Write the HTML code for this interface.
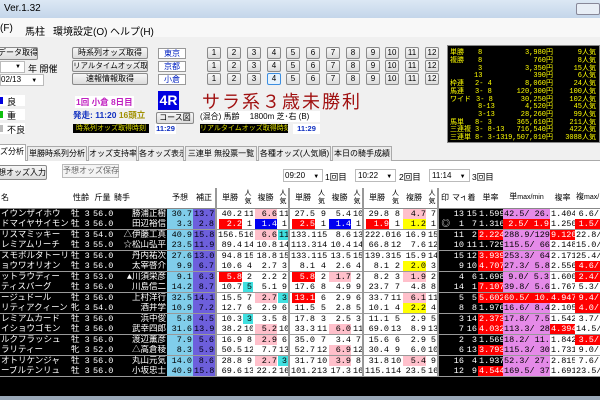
<!DOCTYPE html>
<html><head><meta charset="utf-8"><style>
*{margin:0;padding:0;box-sizing:border-box}
body{width:600px;height:400px;overflow:hidden;background:#f0f0f0;font-family:"Liberation Sans","Noto Sans CJK JP",sans-serif;font-size:10px;position:relative;color:#000}
.a{position:absolute;white-space:nowrap}
.btn{position:absolute;border:1px solid #8a8a8a;border-radius:2px;background:linear-gradient(#f6f6f6,#dcdcdc);text-align:center;font-size:8px;line-height:10px;white-space:nowrap;overflow:hidden}
.nb{position:absolute;width:14px;height:12px;border:1px solid #8a8a8a;border-radius:2px;background:linear-gradient(#f8f8f8,#dadada);text-align:center;font-size:8px;line-height:10px}
.vb{position:absolute;left:158px;width:28px;height:11px;background:#fff;border:1px solid #999;color:#0020c0;font-size:8px;line-height:9px;text-align:center}
.tab{position:absolute;top:146px;height:15px;border:1px solid #aaa;border-bottom:none;background:#ececec;font-size:8px;line-height:13px;text-align:center;white-space:nowrap;overflow:hidden}
table{position:absolute;left:0;top:188px;width:600px;border-collapse:collapse;table-layout:fixed;font-family:"Liberation Mono","Noto Sans CJK JP",monospace;font-size:8.5px}
td{height:10px;line-height:10px;padding:0 1px;white-space:nowrap;overflow:hidden;text-align:right;background:#fff}
tr.h td{height:20px;text-align:center;font-family:"Liberation Sans","Noto Sans CJK JP",sans-serif;font-size:8px;border-bottom:1px solid #888}
tr.s td{border-bottom:1px solid #999}
td.k{background:#000;color:#fff}
td.kl{background:#000;color:#fff;text-align:left}
td.y{background:#80cdea}
td.v{background:#6d5fdc;color:#001}
td.R{background:#f00;color:#fff;box-shadow:inset 2px 0 #fff,inset -1px 0 #fff}
td.B{background:#0000f0;color:#fff;box-shadow:inset 2px 0 #fff,inset -1px 0 #fff}
td.P{background:#ffc0cb;box-shadow:inset 2px 0 #fff,inset -1px 0 #fff}
td.Y{background:#ff0;box-shadow:inset 2px 0 #fff,inset -1px 0 #fff}
td.C{background:#40e0e0}
td.m{background:#e58ae8}
td.mR{background:#f00;color:#fff}
td.kR{background:#f00;color:#fff}
td.g{border-right:2px solid #999}
.od{position:absolute;left:447px;top:45px;width:153px;height:98px;background:#000;border:1px solid #888;color:#ff0;font-family:"Liberation Mono","Noto Sans CJK JP",monospace;font-size:7px;overflow:hidden}
.od div{position:absolute;height:8px;line-height:8px;white-space:pre}
</style></head><body>
<div class="a" style="left:0;top:0;width:600px;height:18px;background:linear-gradient(#dce8f4,#c4d6ea);"></div>
<div class="a" style="left:4px;top:3px;font-size:10px">Ver.1.32</div>
<div class="a" style="left:576px;top:3px;width:24px;height:12px;border:1px solid #889;border-radius:2px;background:#e8eef6"></div>
<div class="a" style="left:0;top:18px;width:600px;height:19px;background:#f8f8f8"></div>
<div class="a" style="left:0;top:23px;font-size:10px">(F)</div>
<div class="a" style="left:25px;top:23px;font-size:10px">馬柱</div>
<div class="a" style="left:53px;top:23px;font-size:10px">環境設定(O)</div>
<div class="a" style="left:110px;top:23px;font-size:10px">ヘルプ(H)</div>

<div class="btn" style="left:-3px;top:47px;width:41px;height:13px">データ取得</div>
<div class="a" style="left:0;top:61px;width:25px;height:12px;background:#fff;border:1px solid #bbb;font-size:6px;line-height:10px;text-align:right;padding-right:3px">▼</div>
<div class="a" style="left:28px;top:62px;font-size:9px">年 開催</div>
<div class="a" style="left:0;top:74px;width:44px;height:12px;background:#fff;border:1px solid #bbb;font-size:8px;line-height:10px">02/13 <span style="font-size:6px;margin-left:8px">▼</span></div>
<div class="a" style="left:0;top:95px;width:25px;height:11px;background:#fff"></div>
<div class="a" style="left:0;top:97px;width:3px;height:7px;background:#0000e0"></div>
<div class="a" style="left:7px;top:95px;font-size:9px">良</div>
<div class="a" style="left:0;top:109px;width:25px;height:11px;background:#fff"></div>
<div class="a" style="left:0;top:111px;width:3px;height:7px;background:#10c010"></div>
<div class="a" style="left:7px;top:109px;font-size:9px">重</div>
<div class="a" style="left:0;top:123px;width:25px;height:11px;background:#fff"></div>
<div class="a" style="left:0;top:125px;width:3px;height:7px;background:#bbb"></div>
<div class="a" style="left:7px;top:123px;font-size:9px">不良</div>

<div class="btn" style="left:72px;top:47px;width:76px;height:12px">時系列オッズ取得</div>
<div class="btn" style="left:72px;top:60px;width:76px;height:12px;font-size:7.5px">リアルタイムオッズ取得</div>
<div class="btn" style="left:72px;top:73px;width:76px;height:12px">速報情報取得</div>
<div class="vb" style="top:48px">東京</div>
<div class="vb" style="top:61px">京都</div>
<div class="vb" style="top:74px">小倉</div>

<div class="nb" style="left:207px;top:47px">1</div><div class="nb" style="left:227px;top:47px">2</div><div class="nb" style="left:247px;top:47px">3</div><div class="nb" style="left:267px;top:47px">4</div><div class="nb" style="left:286px;top:47px">5</div><div class="nb" style="left:306px;top:47px">6</div><div class="nb" style="left:326px;top:47px">7</div><div class="nb" style="left:346px;top:47px">8</div><div class="nb" style="left:366px;top:47px">9</div><div class="nb" style="left:385px;top:47px">10</div><div class="nb" style="left:405px;top:47px">11</div><div class="nb" style="left:425px;top:47px">12</div>
<div class="nb" style="left:207px;top:60px">1</div><div class="nb" style="left:227px;top:60px">2</div><div class="nb" style="left:247px;top:60px">3</div><div class="nb" style="left:267px;top:60px">4</div><div class="nb" style="left:286px;top:60px">5</div><div class="nb" style="left:306px;top:60px">6</div><div class="nb" style="left:326px;top:60px">7</div><div class="nb" style="left:346px;top:60px">8</div><div class="nb" style="left:366px;top:60px">9</div><div class="nb" style="left:385px;top:60px">10</div><div class="nb" style="left:405px;top:60px">11</div><div class="nb" style="left:425px;top:60px">12</div>
<div class="nb" style="left:207px;top:73px">1</div><div class="nb" style="left:227px;top:73px">2</div><div class="nb" style="left:247px;top:73px">3</div><div class="nb" style="left:267px;top:73px;border-color:#3c8ee0;background:#e6f2fc">4</div><div class="nb" style="left:286px;top:73px">5</div><div class="nb" style="left:306px;top:73px">6</div><div class="nb" style="left:326px;top:73px">7</div><div class="nb" style="left:346px;top:73px">8</div><div class="nb" style="left:366px;top:73px">9</div><div class="nb" style="left:385px;top:73px">10</div><div class="nb" style="left:405px;top:73px">11</div><div class="nb" style="left:425px;top:73px">12</div>

<div class="a" style="left:75px;top:96px;font-size:8.5px;font-weight:bold;color:#c020c0;background:#fff;padding:0 1px">1回 小倉 8日目</div>
<div class="a" style="left:73px;top:109px;font-size:8.5px;font-weight:bold;color:#1030c0">発走: 11:20 <span style="color:#a09000">16頭立</span></div>
<div class="a" style="left:158px;top:91px;width:21px;height:19px;background:#0000e0;color:#fff;font-weight:bold;font-size:14px;line-height:19px;text-align:center">4R</div>
<div class="a" style="left:202px;top:88px;font-size:18px;color:#a01010;letter-spacing:2px">サラ系３歳未勝利</div>
<div class="btn" style="left:156px;top:112px;width:38px;height:12px">コース図</div>
<div class="a" style="left:200px;top:111px;width:120px;height:11px;background:#fff;font-size:8px;line-height:11px">(混合) 馬齢　 1800m 芝･右 (B)</div>
<div class="a" style="left:73px;top:124px;width:76px;height:9px;background:#000;color:#e0e000;font-size:7px;line-height:9px;text-align:center;overflow:hidden">時系列オッズ取得時刻</div>
<div class="a" style="left:155px;top:124px;width:21px;height:10px;background:#fff;color:#1030c0;font-size:7.5px;font-weight:bold;line-height:10px;text-align:center">11:29</div>
<div class="a" style="left:200px;top:124px;width:88px;height:9px;background:#000;color:#e0e000;font-size:7px;line-height:9px;text-align:center;overflow:hidden">リアルタイムオッズ取得時刻</div>
<div class="a" style="left:293px;top:124px;width:27px;height:10px;background:#fff;color:#1030c0;font-size:7.5px;font-weight:bold;line-height:10px;text-align:center">11:29</div>

<div class="od">
<div style="top:3px;left:2px">単勝</div><div style="top:3px;left:30px">8</div><div style="top:3px;right:46px">3,980円</div><div style="top:3px;right:3px">9人気</div>
<div style="top:11px;left:2px">複勝</div><div style="top:11px;left:30px">8</div><div style="top:11px;right:46px">760円</div><div style="top:11px;right:3px">8人気</div>
<div style="top:19px;left:30px">3</div><div style="top:19px;right:46px">3,350円</div><div style="top:19px;right:3px">15人気</div>
<div style="top:26px;left:26px">13</div><div style="top:26px;right:46px">390円</div><div style="top:26px;right:3px">6人気</div>
<div style="top:34px;left:2px">枠連</div><div style="top:34px;left:27px">2- 4</div><div style="top:34px;right:46px">8,060円</div><div style="top:34px;right:3px">24人気</div>
<div style="top:42px;left:2px">馬連</div><div style="top:42px;left:27px">3- 8</div><div style="top:42px;right:46px">120,300円</div><div style="top:42px;right:3px">100人気</div>
<div style="top:50px;left:2px">ワイド</div><div style="top:50px;left:28px">3- 8</div><div style="top:50px;right:46px">30,250円</div><div style="top:50px;right:3px">102人気</div>
<div style="top:57px;left:30px">8-13</div><div style="top:57px;right:46px">4,520円</div><div style="top:57px;right:3px">45人気</div>
<div style="top:65px;left:30px">3-13</div><div style="top:65px;right:46px">28,260円</div><div style="top:65px;right:3px">99人気</div>
<div style="top:73px;left:2px">馬単</div><div style="top:73px;left:27px">8- 3</div><div style="top:73px;right:46px">365,610円</div><div style="top:73px;right:3px">211人気</div>
<div style="top:80px;left:2px">三連複</div><div style="top:80px;left:27px">3- 8-13</div><div style="top:80px;right:46px">716,540円</div><div style="top:80px;right:3px">422人気</div>
<div style="top:88px;left:2px">三連単</div><div style="top:88px;left:27px">8- 3-13</div><div style="top:88px;right:46px">19,507,010円</div><div style="top:88px;right:3px">3088人気</div>
</div>

<div class="a" style="left:0;top:160px;width:600px;height:1px;background:#aaa"></div>
<div class="tab" style="left:-2px;width:28px;background:#fff;top:144px;height:17px">ズ分析</div>
<div class="tab" style="left:27px;width:60px">単勝時系列分析</div>
<div class="tab" style="left:88px;width:49px">オッズ支持率</div>
<div class="tab" style="left:138px;width:46px">各オッズ表示</div>
<div class="tab" style="left:185px;width:72px">三連単 無投票一覧</div>
<div class="tab" style="left:258px;width:73px">各種オッズ(人気順)</div>
<div class="tab" style="left:332px;width:60px">本日の騎手成績</div>
<div class="a" style="left:0;top:161px;width:600px;height:27px;background:#fff"></div>
<div class="btn" style="left:-3px;top:165px;width:50px;height:15px;line-height:13px">想オッズ入力</div>
<div class="a" style="left:62px;top:164px;width:57px;height:14px;border:1px solid #bbb;color:#666;font-size:8px;line-height:12px;text-align:center;background:#f4f4f4">予想オッズ保存</div>
<div class="a" style="left:283px;top:169px;width:40px;height:13px;border:1px solid #bbb;font-size:8px;line-height:11px;padding-left:1px">09:20 <span style="font-size:6px;margin-left:6px">▼</span></div>
<div class="a" style="left:325px;top:171px;font-size:8.5px">1回目</div>
<div class="a" style="left:355px;top:169px;width:41px;height:13px;border:1px solid #bbb;font-size:8px;line-height:11px;padding-left:2px">10:22 <span style="font-size:6px;margin-left:6px">▼</span></div>
<div class="a" style="left:399px;top:171px;font-size:8.5px">2回目</div>
<div class="a" style="left:429px;top:169px;width:41px;height:13px;border:1px solid #bbb;font-size:8px;line-height:11px;padding-left:2px">11:14 <span style="font-size:6px;margin-left:6px">▼</span></div>
<div class="a" style="left:472px;top:171px;font-size:8.5px">3回目</div>

<div class="a" style="left:0;top:376px;width:600px;height:20px;background:#000"></div>
<div class="a" style="left:0;top:396px;width:600px;height:4px;background:#9aa8b8"></div>

<table>
<colgroup><col style="width:70px"><col style="width:22px"><col style="width:21px"><col style="width:54px"><col style="width:26px"><col style="width:23px"><col style="width:27px"><col style="width:10px"><col style="width:25px"><col style="width:11px"><col style="width:27px"><col style="width:11px"><col style="width:25px"><col style="width:11px"><col style="width:27px"><col style="width:11px"><col style="width:26px"><col style="width:11px"><col style="width:13px"><col style="width:14px"><col style="width:13px"><col style="width:25px"><col style="width:47px"><col style="width:25px"><col style="width:25px"></colgroup>
<tr class="h"><td style="text-align:left">名</td><td>性齢</td><td>斤量</td><td style="text-align:left">騎手</td><td>予想</td><td class="g">補正</td><td>単勝</td><td style="font-size:7px;line-height:8px">人<br>気</td><td>複勝</td><td class="g" style="font-size:7px;line-height:8px">人<br>気</td><td>単勝</td><td style="font-size:7px;line-height:8px">人<br>気</td><td>複勝</td><td class="g" style="font-size:7px;line-height:8px">人<br>気</td><td>単勝</td><td style="font-size:7px;line-height:8px">人<br>気</td><td>複勝</td><td class="g" style="font-size:7px;line-height:8px">人<br>気</td><td>印</td><td>マイ</td><td>着</td><td>単率</td><td>単<span style="font-size:7px">max/min</span></td><td>複率</td><td style="text-align:left">複<span style="font-size:7px">max/</span></td></tr>
<tr><td class="kl">イウンザイホウ</td><td class="kl">牡 3</td><td class="k">56.0</td><td class="k">勝浦正樹</td><td class="y">30.7</td><td class="v g">13.7</td><td>40.2</td><td>11</td><td class="P">6.6</td><td class="g">11</td><td>27.5</td><td>9</td><td>5.4</td><td class="g">10</td><td>29.8</td><td>8</td><td class="P">4.7</td><td class="g">7</td><td class="k"></td><td class="k">13</td><td class="k">15</td><td class="k">1.599</td><td class="m">42.5/ 26.6</td><td>1.404</td><td>6.6/</td></tr>
<tr class="s"><td class="kl">ドマイヤサイモン</td><td class="kl">牡 3</td><td class="k">56.0</td><td class="k">田辺裕信</td><td class="y">3.3</td><td class="v g">2.8</td><td class="R">2.2</td><td>1</td><td class="B">1.4</td><td class="g">1</td><td class="R">2.5</td><td>1</td><td class="B">1.4</td><td class="g">1</td><td class="R">1.9</td><td>1</td><td class="Y">1.2</td><td class="g">1</td><td class="k">◎</td><td class="k">1</td><td class="k">7</td><td class="k">1.316</td><td class="mR">2.5/ 1.9</td><td>1.250</td><td class="mR">1.5/</td></tr>
<tr><td class="kl">リスマミッキー</td><td class="kl">牡 3</td><td class="k">54.0</td><td class="k">△伊藤工真</td><td class="y">40.9</td><td class="v g">15.8</td><td>156.5</td><td>16</td><td class="P">6.6</td><td class="C g">11</td><td>133.1</td><td>15</td><td>8.6</td><td class="g">13</td><td>222.0</td><td>16</td><td>16.9</td><td class="g">15</td><td class="k"></td><td class="k">11</td><td class="k">2</td><td class="kR">2.224</td><td class="m">288.9/129.9</td><td class="kR">9.120</td><td>22.8/</td></tr>
<tr class="s"><td class="kl">レミアムリーチ</td><td class="kl">牡 3</td><td class="k">55.0</td><td class="k">☆松山弘平</td><td class="y">23.5</td><td class="v g">11.9</td><td>89.4</td><td>14</td><td>10.8</td><td class="g">14</td><td>113.3</td><td>14</td><td>10.4</td><td class="g">14</td><td>66.8</td><td>12</td><td>7.6</td><td class="g">12</td><td class="k"></td><td class="k">10</td><td class="k">11</td><td class="k">1.729</td><td class="m">115.5/ 66.8</td><td>2.148</td><td>15.0/</td></tr>
<tr><td class="kl">スモボルタトーリ</td><td class="kl">牡 3</td><td class="k">56.0</td><td class="k">丹内祐次</td><td class="y">27.6</td><td class="v g">13.0</td><td>94.8</td><td>15</td><td>18.8</td><td class="g">15</td><td>133.1</td><td>15</td><td>13.5</td><td class="g">15</td><td>139.3</td><td>15</td><td>15.9</td><td class="g">14</td><td class="k"></td><td class="k">15</td><td class="k">12</td><td class="kR">3.939</td><td class="m">253.3/ 64.3</td><td>2.171</td><td>25.4/</td></tr>
<tr class="s"><td class="kl">ョウワオリオン</td><td class="kl">牡 3</td><td class="k">56.0</td><td class="k">太宰啓介</td><td class="y">9.9</td><td class="v g">6.7</td><td>10.6</td><td>4</td><td>2.7</td><td class="g">3</td><td>8.1</td><td>4</td><td>2.6</td><td class="g">4</td><td>8.1</td><td>2</td><td class="Y">2.0</td><td class="g">3</td><td class="k"></td><td class="k">9</td><td class="k">10</td><td class="kR">4.707</td><td class="m">27.3/ 5.8</td><td>2.556</td><td class="mR">4.6/</td></tr>
<tr><td class="kl">ットラウディー</td><td class="kl">牡 3</td><td class="k">53.0</td><td class="k">▲川須栄彦</td><td class="y">9.1</td><td class="v g">6.3</td><td class="R">5.8</td><td>2</td><td>2.2</td><td class="g">2</td><td class="R">5.8</td><td>2</td><td class="P">1.7</td><td class="g">2</td><td>8.2</td><td>3</td><td class="P">1.9</td><td class="g">2</td><td class="k"></td><td class="k">4</td><td class="k">6</td><td class="k">1.698</td><td class="m">9.0/ 5.3</td><td>1.600</td><td class="mR">2.4/</td></tr>
<tr class="s"><td class="kl">ティスバーグ</td><td class="kl">牡 3</td><td class="k">56.0</td><td class="k">川島信二</td><td class="y">14.2</td><td class="v g">8.7</td><td>10.7</td><td class="C">5</td><td>5.1</td><td class="g">9</td><td>17.6</td><td>8</td><td>4.9</td><td class="g">9</td><td>23.7</td><td>7</td><td>4.8</td><td class="g">8</td><td class="k"></td><td class="k">14</td><td class="k">1</td><td class="kR">7.107</td><td class="m">39.8/ 5.6</td><td>1.767</td><td>5.3/</td></tr>
<tr><td class="kl">ージュドール</td><td class="kl">牡 3</td><td class="k">56.0</td><td class="k">上村洋行</td><td class="y">32.5</td><td class="v g">14.1</td><td>15.5</td><td>7</td><td class="P">2.7</td><td class="C g">3</td><td class="R">13.1</td><td>6</td><td>2.9</td><td class="g">6</td><td>33.7</td><td>11</td><td class="P">6.1</td><td class="g">11</td><td class="k"></td><td class="k">5</td><td class="k">5</td><td class="kR">5.602</td><td class="mR">60.5/ 10.8</td><td class="kR">4.947</td><td class="mR">9.4/</td></tr>
<tr class="s"><td class="kl">リティアクィーン</td><td class="kl">牝 3</td><td class="k">54.0</td><td class="k">酒井学</td><td class="y">10.9</td><td class="v g">7.2</td><td>12.7</td><td>6</td><td>2.9</td><td class="g">6</td><td>11.5</td><td>5</td><td>2.8</td><td class="g">5</td><td>10.1</td><td>4</td><td class="Y">2.2</td><td class="g">4</td><td class="k"></td><td class="k">8</td><td class="k">8</td><td class="k">1.976</td><td class="m">16.6/ 8.4</td><td>2.105</td><td class="mR">4.0/</td></tr>
<tr><td class="kl">レミアムカード</td><td class="kl">牡 3</td><td class="k">56.0</td><td class="k">浜中俊</td><td class="y">5.8</td><td class="v g">4.5</td><td>10.3</td><td class="C">3</td><td>3.5</td><td class="g">8</td><td>17.8</td><td>3</td><td>2.5</td><td class="g">3</td><td>11.1</td><td>5</td><td>2.9</td><td class="g">5</td><td class="k"></td><td class="k">3</td><td class="k">14</td><td class="kR">2.373</td><td class="m">17.8/ 7.5</td><td>1.542</td><td>3.7/</td></tr>
<tr class="s"><td class="kl">イショウゴモン</td><td class="kl">牡 3</td><td class="k">56.0</td><td class="k">武幸四郎</td><td class="y">31.6</td><td class="v g">13.9</td><td>38.2</td><td>10</td><td class="P">5.2</td><td class="g">10</td><td>33.3</td><td>11</td><td class="P">6.0</td><td class="g">11</td><td>69.0</td><td>13</td><td>8.9</td><td class="g">13</td><td class="k"></td><td class="k">7</td><td class="k">16</td><td class="kR">4.032</td><td class="m">113.3/ 28.1</td><td class="kR">4.394</td><td>14.5/</td></tr>
<tr><td class="kl">ルクフラッシュ</td><td class="kl">牡 3</td><td class="k">56.0</td><td class="k">渡辺薫彦</td><td class="y">7.9</td><td class="v g">5.6</td><td>16.9</td><td>8</td><td class="P">2.9</td><td class="g">6</td><td>35.0</td><td>7</td><td>3.4</td><td class="g">7</td><td>15.6</td><td>6</td><td>2.9</td><td class="g">5</td><td class="k"></td><td class="k">2</td><td class="k">3</td><td class="k">1.569</td><td class="m">18.2/ 11.6</td><td>1.842</td><td class="mR">3.5/</td></tr>
<tr class="s"><td class="kl">ラリティー</td><td class="kl">牝 3</td><td class="k">52.0</td><td class="k">△高倉稜</td><td class="y">8.3</td><td class="v g">5.9</td><td>50.5</td><td>12</td><td>7.7</td><td class="g">13</td><td>52.7</td><td>12</td><td class="P">6.9</td><td class="g">12</td><td>30.4</td><td>9</td><td>6.0</td><td class="g">10</td><td class="k"></td><td class="k">6</td><td class="k">13</td><td class="kR">3.793</td><td class="m">115.3/ 30.4</td><td>1.731</td><td>9.0/</td></tr>
<tr><td class="kl">オトリケンジャ</td><td class="kl">牡 3</td><td class="k">56.0</td><td class="k">丸山元気</td><td class="y">14.0</td><td class="v g">8.6</td><td>28.8</td><td>9</td><td class="P">2.7</td><td class="C g">3</td><td>31.7</td><td>10</td><td class="P">3.9</td><td class="g">8</td><td>31.8</td><td>10</td><td class="P">5.4</td><td class="g">9</td><td class="k"></td><td class="k">16</td><td class="k">4</td><td class="k">1.937</td><td class="m">52.3/ 27.0</td><td>2.815</td><td>7.6/</td></tr>
<tr class="s"><td class="kl">ーブルテンリュ</td><td class="kl">牡 3</td><td class="k">56.0</td><td class="k">小坂忠士</td><td class="y">40.9</td><td class="v g">15.8</td><td>69.6</td><td>13</td><td>22.2</td><td class="g">16</td><td>101.2</td><td>13</td><td>17.3</td><td class="g">16</td><td>115.1</td><td>14</td><td>23.5</td><td class="g">16</td><td class="k"></td><td class="k">12</td><td class="k">9</td><td class="kR">4.544</td><td class="m">169.5/ 37.3</td><td>1.691</td><td>23.5/</td></tr>
</table>
</body></html>
